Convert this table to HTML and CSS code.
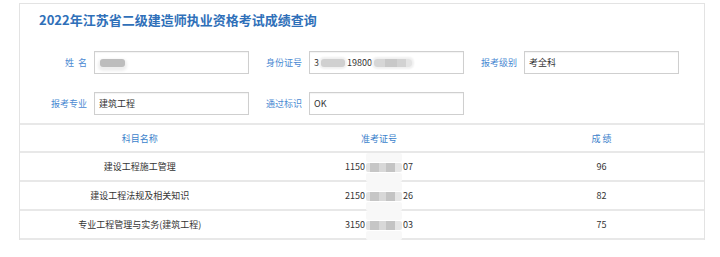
FILE: index.html
```html
<!DOCTYPE html>
<html lang="zh-CN">
<head>
<meta charset="utf-8">
<title>成绩查询</title>
<link rel="stylesheet" href="styles.css">
</head>
<body>
<div class="card">
  <h1 class="title">2022年江苏省二级建造师执业资格考试成绩查询</h1>

  <div class="form">
    <div class="label">姓&nbsp;&nbsp;名</div>
    <div class="field"><span class="mask mask-name"></span></div>
    <div class="label">身份证号</div>
    <div class="field">3<span class="mask mask-id1"></span>19800<span class="mask mask-id2"></span></div>
    <div class="label">报考级别</div>
    <div class="field">考全科</div>

    <div class="label">报考专业</div>
    <div class="field">建筑工程</div>
    <div class="label">通过标识</div>
    <div class="field">OK</div>
  </div>

  <table class="scores">
    <colgroup>
      <col class="c-name">
      <col class="c-no">
      <col class="c-score">
    </colgroup>
    <thead>
      <tr><th>科目名称</th><th>准考证号</th><th>成&nbsp;绩</th></tr>
    </thead>
    <tbody>
      <tr><td>建设工程施工管理</td><td>1150<span class="mask mask-no"></span>07</td><td>96</td></tr>
      <tr><td>建设工程法规及相关知识</td><td>2150<span class="mask mask-no"></span>26</td><td>82</td></tr>
      <tr><td>专业工程管理与实务(建筑工程)</td><td>3150<span class="mask mask-no"></span>03</td><td>75</td></tr>
    </tbody>
  </table>
</div>
</body>
</html>
```
FILE: styles.css
```css
html, body {
  margin: 0;
  padding: 0;
  background: #fff;
}

body {
  font-family: "Noto Sans CJK SC", "Noto Sans", sans-serif;
  font-size: 9px;
  color: #333;
}

.card {
  width: 684px;
  margin: 3px 0 0 19px;
  border: 1px solid #e3e3e3;
  border-bottom: none;
}

.title {
  margin: 0;
  padding: 7px 0 0 19px;
  font-size: 13px;
  line-height: 18px;
  font-weight: bold;
  color: #2f70b9;
}

/* query fields: three label/box pairs per row */
.form {
  display: grid;
  grid-template-columns: repeat(3, 46px 155px);
  column-gap: 7px;
  row-gap: 18px;
  padding: 22px 0 8px 21px;
  border-bottom: 2px solid #e8e8e8;
}

.label {
  align-self: center;
  text-align: right;
  color: #4a89d2;
  line-height: 12px;
  white-space: nowrap;
}

.field {
  box-sizing: border-box;
  height: 23px;
  border: 1px solid #cfcfcf;
  box-shadow: inset 0 1px 1px rgba(0, 0, 0, 0.05);
  padding: 0 4px;
  display: flex;
  align-items: center;
  white-space: nowrap;
}

/* blurred privacy patches */
.mask {
  display: inline-block;
  height: 8px;
  vertical-align: middle;
  border-radius: 3px;
  background: #bdbdbd;
  filter: blur(0.6px);
}

.mask-name {
  width: 25px;
  margin-left: 1px;
  box-shadow: 0 2px 3px 2px #eeeeee;
}

.mask-id1 {
  width: 24px;
  margin: 0 2px;
  background: #d0d0d0;
  box-shadow: 0 0 2px 2px #f0f0f0;
}

.mask-id2 {
  width: 38px;
  margin-left: 2px;
  background: linear-gradient(90deg, #d6d6d6 0 30%, #c8c8c8 30% 60%, #d2d2d2 60% 85%, #e4e4e4 85%);
  box-shadow: 0 0 2px 2px #f0f0f0;
}

.mask-no {
  width: 36px;
  height: 9px;
  margin: 0 1px;
  border-radius: 2px;
  background: linear-gradient(90deg, #e2e2e2 0 10%, #c6c6c6 10% 35%, #d8d8d8 35% 55%, #c4c4c4 55% 80%, #e6e6e6 80%);
  /* pale band running up and down over the row rules */
  box-shadow: 0 -10px 0 #f8f8f8, 0 10px 0 #f8f8f8;
  filter: none;
}

.scores {
  width: 100%;
  border-collapse: collapse;
  table-layout: fixed;
}

.c-name { width: 35%; }
.c-no { width: 35%; }
.c-score { width: 30%; }

.scores th,
.scores td {
  padding: 0;
  text-align: center;
  border-bottom: 2px solid #e8e8e8;
  white-space: nowrap;
}

.scores th {
  height: 26px;
  font-weight: normal;
  color: #3b7fcb;
}

.scores td {
  height: 27px;
}
```
